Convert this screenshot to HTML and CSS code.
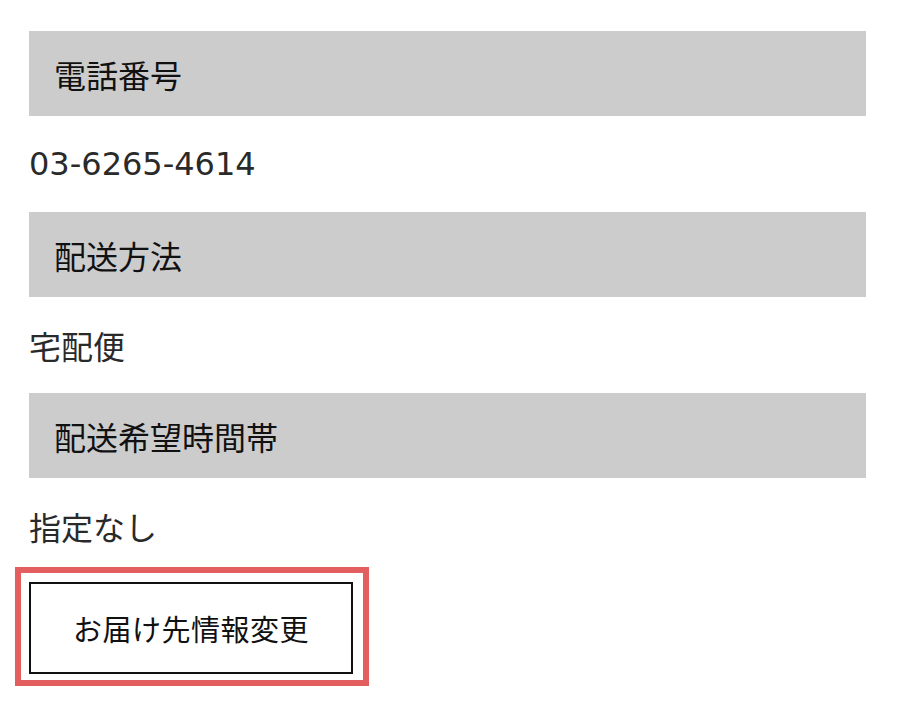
FILE: index.html
```
<!DOCTYPE html>
<html lang="ja">
<head>
<meta charset="utf-8">
<link rel="stylesheet" href="styles.css">
</head>
<body>
<div class="page">
  <div class="label">電話番号</div>
  <div class="value value-num">03-6265-4614</div>
  <div class="label">配送方法</div>
  <div class="value">宅配便</div>
  <div class="label">配送希望時間帯</div>
  <div class="value">指定なし</div>
  <div class="highlight">
    <button class="btn">お届け先情報変更</button>
  </div>
</div>
</body>
</html>
```
FILE: styles.css
```
html, body {
  margin: 0;
  padding: 0;
  background: #ffffff;
}
.page {
  padding: 31px 34px 0 29px;
  font-family: "Noto Sans CJK JP", "Noto Sans", sans-serif;
}
.label {
  height: 85px;
  background: #cccccc;
  color: #111111;
  font-size: 32px;
  padding-left: 25px;
  display: flex;
  align-items: center;
}
.value {
  height: 96px;
  color: #2a2a2a;
  font-size: 32px;
  display: flex;
  align-items: center;
}
.value-num {
  font-family: "DejaVu Sans", "Noto Sans CJK JP", sans-serif;
  font-size: 32px;
}
.highlight {
  margin-left: -14px;
  margin-top: -7px;
  width: 354px;
  box-sizing: border-box;
  border: 6px solid #e35e5e;
  padding: 9px 10px 6px 8px;
}
.btn {
  display: block;
  width: 324px;
  height: 92px;
  box-sizing: border-box;
  border: 2.5px solid #111111;
  background: #ffffff;
  font-family: "Noto Sans CJK JP", "Noto Sans", sans-serif;
  font-size: 29px;
  letter-spacing: 0.5px;
  color: #111111;
  padding: 0;
  margin: 0;
}
```
